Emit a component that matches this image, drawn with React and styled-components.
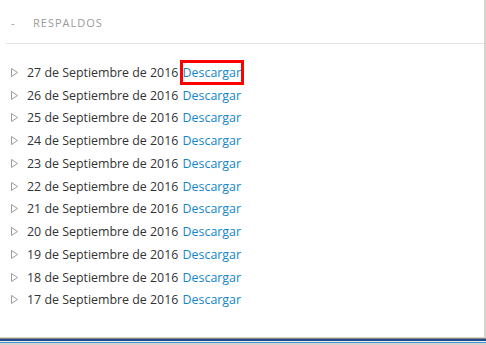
import React from "react";
import styled, { createGlobalStyle } from "styled-components";

const Global = createGlobalStyle`
  html, body { margin: 0; padding: 0; background: #fff; }
  body { font-family: "Open Sans", "Liberation Sans", sans-serif; }
`;

const Screen = styled.div`
  width: 486px;
  height: 345px;
  display: flex;
  flex-direction: column;
  overflow: hidden;
`;

const Panel = styled.div`
  flex: 1;
  background: #fff;
  border-right: 2px solid #d6d3ca;
  padding: 0 0 0 6px;
`;

const Header = styled.div`
  height: 44px;
  display: flex;
  align-items: center;
  padding-left: 5px;
  padding-top: 2px;
  border-bottom: 1px solid #e4e4e4;
  color: #9a9a9a;
  font-size: 11px;
  letter-spacing: 1px;
  text-transform: uppercase;
  box-sizing: border-box;
`;

const Dash = styled.span`
  width: 22px;
`;

const List = styled.ul`
  list-style: none;
  margin: 0;
  padding: 17px 0 0 5px;
`;

const Item = styled.li`
  height: 22.75px;
  display: flex;
  align-items: center;
  font-size: 12.4px;
  color: #333;
  white-space: pre;
`;

const Arrow = styled.svg`
  width: 7px;
  height: 9px;
  margin-right: 9px;
  flex: none;
`;

const Link = styled.a`
  color: #1386cc;
  text-decoration: none;
  display: inline-block;
  line-height: 19px;
  margin-left: 1px;
  outline: ${(p) => (p.$marked ? "3px solid #ff0000" : "none")};
`;

const Taskbar = styled.div`
  height: 8px;
  flex: none;
  background: linear-gradient(
    to bottom,
    #d6d3ca 0 1px,
    #8a8780 1px 2px,
    #1f4c87 2px 4px,
    #e9eef6 4px 5px,
    #4a8fd6 5px 6px,
    #d6d3ca 6px 8px
  );
`;

const dates = [27, 26, 25, 24, 23, 22, 21, 20, 19, 18, 17];

export default function App() {
  return (
    <>
      <Global />
      <Screen>
        <Panel>
          <Header>
            <Dash>-</Dash>
            <span>Respaldos</span>
          </Header>
          <List>
            {dates.map((d, i) => (
              <Item key={d}>
                <Arrow viewBox="0 0 7 9">
                  <path d="M0.5 0.5 L6.5 4.5 L0.5 8.5 Z" fill="none" stroke="#9b9b9b" strokeWidth="1" />
                </Arrow>
                {`${d} de Septiembre de 2016 `}
                <Link href="#" $marked={i === 0}>Descargar</Link>
              </Item>
            ))}
          </List>
        </Panel>
        <Taskbar />
      </Screen>
    </>
  );
}
